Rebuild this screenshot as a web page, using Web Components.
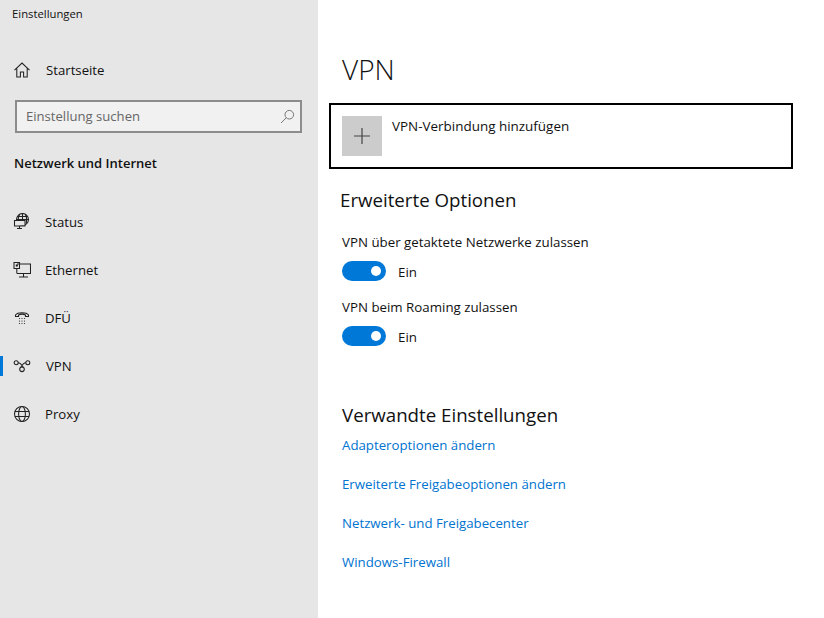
<!DOCTYPE html>
<html lang="de"><head><meta charset="utf-8"><title>VPN</title>
<style>
html,body{margin:0;height:100%;background:#fff}
body{font-family:"Open Sans","Noto Sans",sans-serif;color:#111;overflow:hidden}
</style></head><body>
<settings-app>
  <settings-side slot="side">
    <nav-item label="Startseite" icon="home" home></nav-item>
    <search-box placeholder="Einstellung suchen"></search-box>
    <h-section>Netzwerk und Internet</h-section>
    <nav-item label="Status" icon="status"></nav-item>
    <nav-item label="Ethernet" icon="ethernet"></nav-item>
    <nav-item label="DFÜ" icon="dial"></nav-item>
    <nav-item label="VPN" icon="vpn" active></nav-item>
    <nav-item label="Proxy" icon="proxy"></nav-item>
  </settings-side>
  <settings-main slot="main">
    <add-card label="VPN-Verbindung hinzufügen"></add-card>
    <sub-head style="margin:18px 0 0 -2px">Erweiterte Optionen</sub-head>
    <toggle-row style="margin-top:19px" label="VPN über getaktete Netzwerke zulassen"></toggle-row>
    <toggle-row style="margin-top:16px" label="VPN beim Roaming zulassen"></toggle-row>
    <sub-head style="margin-top:56px">Verwandte Einstellungen</sub-head>
    <link-list style="margin-top:7px">
      <a href="#">Adapteroptionen ändern</a>
      <a href="#">Erweiterte Freigabeoptionen ändern</a>
      <a href="#">Netzwerk- und Freigabecenter</a>
      <a href="#">Windows-Firewall</a>
    </link-list>
  </settings-main>
</settings-app>
<script>
const ICONS={
 home:'<path d="M1.500 9.200 9 2l7.500 7.200M3.800 7.500V16h3.600v-5h3.200v5h3.600V7.500"/>',
 status:'<circle cx="9.500" cy="6.500" r="6"/><path d="M3.500 6.500h12M4.500 3.500h10M9.500 .5v6M6.500 1.500c-1 2-1.300 3.500-1.300 5M12.500 1.500c1.500 3 1.500 6 .7 9"/><path fill="#e6e6e6" stroke="none" d="M1 7h11v5.500H1z"/><path d="M1.500 7.500h10.500v5.500H1.500zM6.500 13v2.500M4 15.500h5"/>',
 ethernet:'<path d="M4 3h13.500v9.500H4M10.500 12.500v3.500M6 16h9"/><path d="M1 1.500h5.500v6H1z"/><path d="M2.800 3.500h2v2h-2z" fill="#111" stroke="none"/><path d="M3.800 7.500V12.500"/>',
 dial:'<path d="M2.500 7.500V6C4.500 3 13.500 3 15.500 6v1.500h-3V6c-2-1-5-1-7 0v1.500z"/><g stroke="none" fill="#222"><circle cx="6.500" cy="9.500" r=".6"/><circle cx="9" cy="9.500" r=".6"/><circle cx="11.500" cy="9.500" r=".6"/><circle cx="6.500" cy="12" r=".6"/><circle cx="9" cy="12" r=".6"/><circle cx="11.500" cy="12" r=".6"/><circle cx="6.500" cy="14.500" r=".6"/><circle cx="9" cy="14.500" r=".6"/><circle cx="11.500" cy="14.500" r=".6"/></g>',
 vpn:'<circle cx="3.200" cy="5.800" r="2"/><circle cx="14.800" cy="5.800" r="2"/><circle cx="9" cy="12.300" r="2.300"/><path d="M5.200 5.800c2.500 0 3.500 2 5 4.500M12.800 5.800c-2.500 0-3.500 2-5 4.500"/>',
 proxy:'<circle cx="9" cy="9" r="7.500"/><ellipse cx="9" cy="9" rx="3.400" ry="7.500"/><path d="M2 6.500h14M2 11.500h14"/>'
};
function def(name,css,html){
  customElements.define(name,class extends HTMLElement{
    constructor(){super();this.attachShadow({mode:'open'})}
    connectedCallback(){
      const g=a=>this.getAttribute(a)||'';
      this.shadowRoot.innerHTML='<style>'+css+'</style>'+(typeof html==='function'?html(g,this):html);
    }
  });
}
const FS='font-size:13.200px;color:#111;';
def('settings-app',':host{display:flex;width:824px;height:618px}::slotted([slot=side]){flex:0 0 318px}::slotted([slot=main]){flex:1}','<slot name="side"></slot><slot name="main"></slot>');
def('settings-side',':host{display:flex;flex-direction:column;background:#e6e6e6;height:618px;box-sizing:border-box}.t{font-size:11.300px;line-height:16px;padding:6px 0 0 12px;color:#111}.b{margin-top:24px;display:flex;flex-direction:column}','<div class="t">Einstellungen</div><div class="b"><slot></slot></div>');
def('nav-item',':host{display:flex;align-items:center;height:48px;position:relative;'+FS+'}svg{width:18px;height:18px;margin-left:13px;flex:none;fill:none;stroke:#222;stroke-width:1.050}span{margin-left:14px}:host([home]) span,:host([active]) span{margin-left:15px}.bar{position:absolute;left:0;top:14px;width:3px;height:20px;background:#0078d7}',
 (g,el)=>`${el.hasAttribute('active')?'<div class="bar"></div>':''}<svg viewBox="0 0 18 18">${ICONS[g('icon')]}</svg><span>${g('label')}</span>`);
def('search-box',':host{display:flex;align-items:center;justify-content:space-between;box-sizing:border-box;width:287px;height:33px;margin:6px 0 0 15px;border:2px solid #8c8c8c;background:#f1f1f1;padding:0 5px 1px 9px;font-size:13.100px;color:#666}svg{width:15px;height:15px;fill:none;stroke:#777;stroke-width:1}',
 g=>`<span>${g('placeholder')}</span><svg viewBox="0 0 15 15"><circle cx="9.300" cy="5.700" r="4.300"/><path d="M6.200 8.800 1 14"/></svg>`);
def('h-section',':host{display:block;margin:20px 0 25px 14px;font-size:13px;line-height:20px;font-weight:600;color:#111}','<slot></slot>');
def('settings-main',':host{display:flex;flex-direction:column;padding:0 31px 0 24px;box-sizing:border-box;height:618px;background:#fff}h1{font-weight:300;font-size:28px;line-height:38px;margin:50px 0 15px 0;color:#111}','<h1>VPN</h1><slot></slot>');
def('add-card',':host{display:flex;box-sizing:border-box;margin-left:-13px;width:464px;height:66px;border:2.500px solid #000;padding:10.500px 0 0 10.500px;font-size:13.450px;color:#111}.p{width:40px;height:40px;background:#ccc;display:flex;align-items:center;justify-content:center;flex:none}svg{width:16px;height:16px;stroke:#444;stroke-width:1.200}span{margin:0 0 0 10.500px;line-height:20px}',
 g=>`<div class="p"><svg viewBox="0 0 16 16"><path d="M8 0v16M0 8h16"/></svg></div><span>${g('label')}</span>`);
def('sub-head',':host{display:block;font-size:18.700px;line-height:26px;color:#111}','<slot></slot>');
def('toggle-row',':host{display:block;font-size:13.300px;color:#111}.l{line-height:20px}.r{display:flex;align-items:center;margin-top:9px;height:20px}.s{box-sizing:border-box;width:44px;height:20px;border-radius:10px;background:#0078d7;display:flex;justify-content:flex-end;align-items:center;padding-right:5px}.k{width:10px;height:10px;border-radius:50%;background:#fff}span{margin-left:12px;position:relative;top:1px}',
 g=>`<div class="l">${g('label')}</div><div class="r"><div class="s"><div class="k"></div></div><span>Ein</span></div>`);
def('link-list',':host{display:flex;flex-direction:column;align-items:flex-start;gap:19px}::slotted(a){color:#0073cf;text-decoration:none;font-size:13.250px;line-height:20px}','<slot></slot>');
</script>
</body></html>
